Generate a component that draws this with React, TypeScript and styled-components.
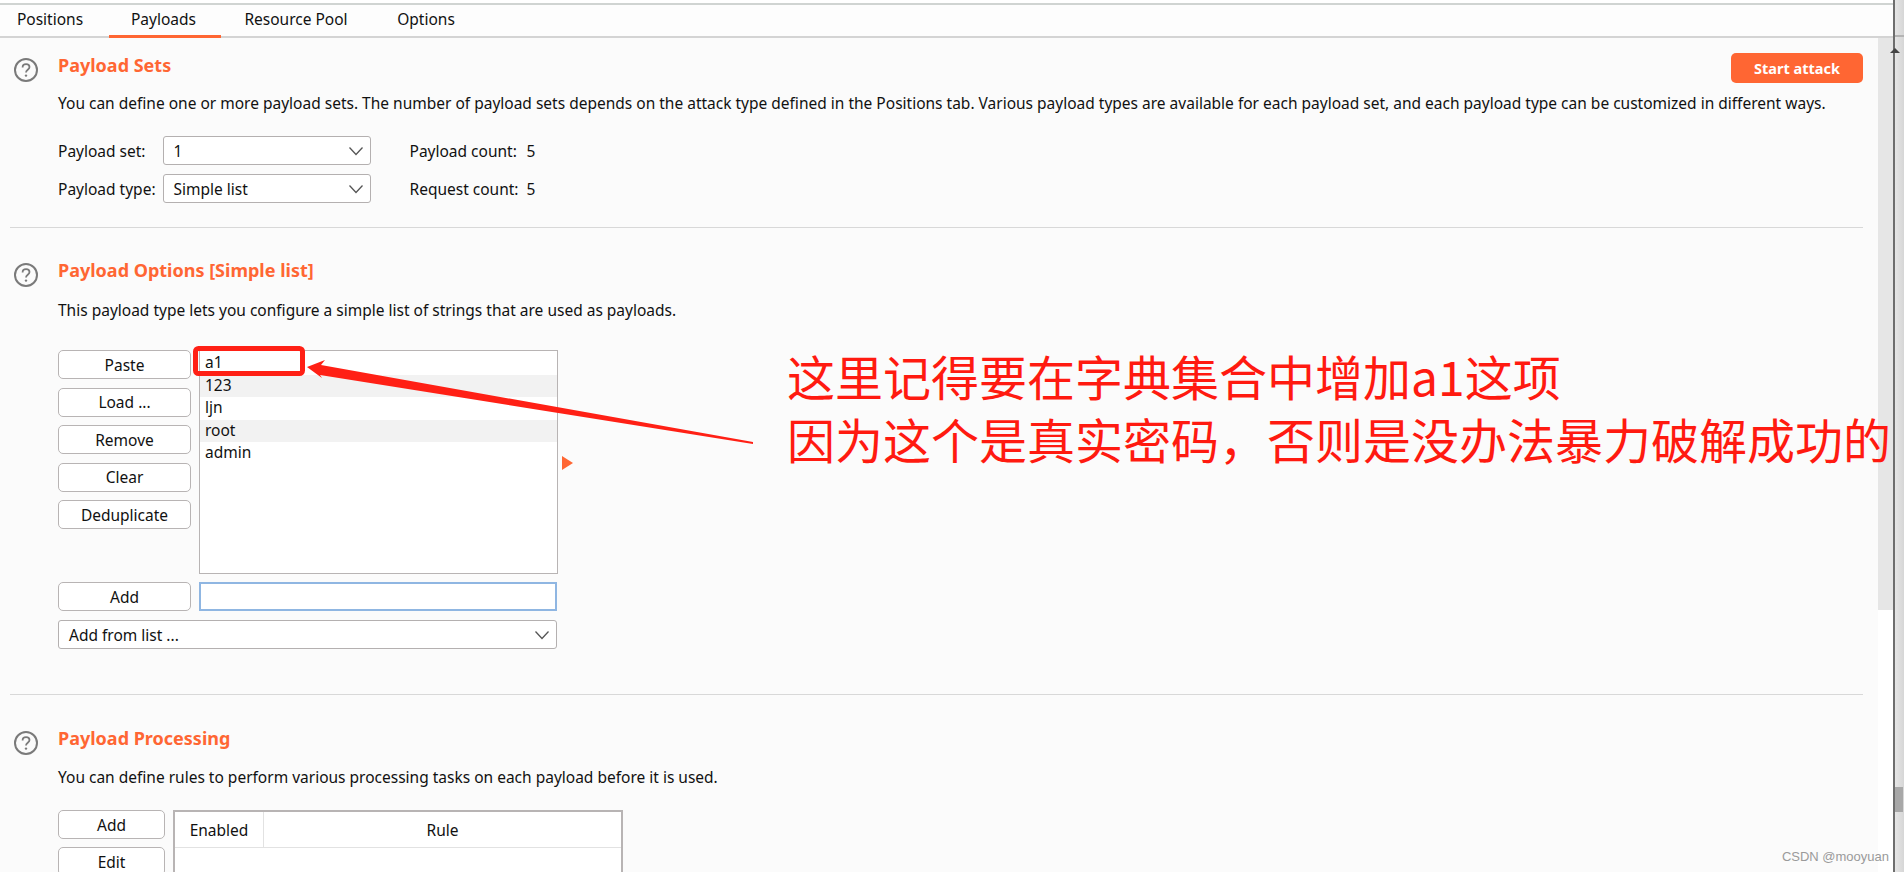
import React from "react";
import styled, { createGlobalStyle } from "styled-components";

const GlobalStyle = createGlobalStyle`
  html, body {
    margin: 0;
    padding: 0;
    background: #fff;
    overflow: hidden;
  }
  * {
    box-sizing: border-box;
  }
`;

const uiFont = `"Noto Sans", "Open Sans", "Noto Sans CJK SC", sans-serif`;

const Screen = styled.div`
  position: relative;
  display: flex;
  width: 1904px;
  height: 872px;
  overflow: hidden;
  font-family: ${uiFont};
  font-size: 15.5px;
  color: #111;
  background: #fff;
`;

const Main = styled.div`
  display: flex;
  flex-direction: column;
  width: 1893px;
  flex: none;
  padding-top: 3px;
`;

const TabBar = styled.div`
  display: flex;
  height: 35px;
  flex: none;
  border-top: 2px solid #d0d4d2;
  border-bottom: 2px solid #d4d4d4;
  background: #fdfdfd;
`;

const Tab = styled.div<{ $active?: boolean; $width: number; $gapAfter?: number }>`
  display: flex;
  align-items: center;
  justify-content: center;
  width: ${(p) => p.$width}px;
  margin-right: ${(p) => p.$gapAfter ?? 0}px;
  height: 33px;
  padding: 0 ${(p) => (p.$active ? 3 : 0)}px 3px 0;
  border-bottom: 3px solid ${(p) => (p.$active ? "#ff6633" : "transparent")};
`;

const Body = styled.div`
  display: flex;
  flex: 1;
  min-height: 0;
`;

const Content = styled.div`
  width: 1878px;
  flex: none;
  padding: 0 15px 0 10px;
  background: #fbfbfb;
  overflow: hidden;
`;

const InnerScroll = styled.div`
  width: 15px;
  flex: none;
  background: linear-gradient(#e6e6e6 0, #e6e6e6 572px, #fff 572px);
`;

const OuterScroll = styled.div`
  display: flex;
  flex-direction: column;
  flex: 1;
  padding-top: 35px;
  border-left: 2px solid #6e6e6e;
  background: linear-gradient(90deg, #e6e6e6, #d6d6d6);
`;

const OuterBand = styled.div`
  height: 2px;
  background: #b4b4b4;
`;

const OuterArrow = styled.div`
  width: 0;
  height: 0;
  margin-top: 11px;
  border-left: 5px solid transparent;
  border-right: 5px solid transparent;
  border-bottom: 5px solid #444;
  margin-left: -5px;
`;

const OuterThumb = styled.div`
  width: 8px;
  height: 25px;
  margin-top: 734px;
  background: #a8a8a8;
`;

const Section = styled.section<{ $height: number; $divider?: boolean }>`
  height: ${(p) => p.$height}px;
  border-bottom: ${(p) => (p.$divider ? "1px solid #d8d8d8" : "none")};
`;

const SectionHead = styled.div<{ $top: number }>`
  display: flex;
  align-items: flex-start;
  justify-content: space-between;
  padding-top: ${(p) => p.$top}px;
`;

const HeadLeft = styled.div`
  display: flex;
`;

const HelpIcon = styled.svg`
  width: 26px;
  height: 26px;
  margin: 4px 19px 0 3px;
  flex: none;
`;

const Heading = styled.h2`
  margin: 0;
  font-size: 18px;
  line-height: 24px;
  font-weight: 700;
  color: #ff6633;
`;

const Description = styled.p<{ $top: number; $bottom: number }>`
  width: fit-content;
  margin: ${(p) => p.$top}px 0 ${(p) => p.$bottom}px 48px;
  line-height: 20px;
  white-space: nowrap;
`;

const StartAttack = styled.button`
  width: 132px;
  height: 30px;
  padding-bottom: 2px;
  border: none;
  border-radius: 5px;
  background: #ff6633;
  color: #fff;
  font: 700 14.5px ${uiFont};
`;

const FieldRow = styled.div<{ $top?: number }>`
  display: flex;
  align-items: center;
  height: 29px;
  margin: ${(p) => p.$top ?? 0}px 0 0 48px;
`;

const FieldLabel = styled.span`
  width: 104.5px;
  flex: none;
  white-space: nowrap;
`;

const CountLabel = styled.span`
  width: 117px;
  margin-left: 39px;
  flex: none;
  white-space: nowrap;
`;

const SelectBox = styled.div<{ $width: number }>`
  display: flex;
  align-items: center;
  justify-content: space-between;
  width: ${(p) => p.$width}px;
  height: 29px;
  padding: 0 6px 0 10px;
  border: 1px solid #b4b0b0;
  border-radius: 3px;
  background: #fff;
  flex: none;
`;

const Chevron = styled.svg`
  width: 16px;
  height: 10px;
`;

const ListArea = styled.div`
  display: flex;
  gap: 8px;
  margin-left: 48px;
`;

const ButtonColumn = styled.div<{ $gap: number }>`
  display: flex;
  flex-direction: column;
  gap: ${(p) => p.$gap}px;
  flex: none;
`;

const SideButton = styled.button<{ $width: number }>`
  width: ${(p) => p.$width}px;
  height: 29px;
  padding: 0;
  border: 1px solid #b8b4b4;
  border-radius: 5px;
  background: #fff;
  color: #111;
  font: 15.5px ${uiFont};
`;

const ListBox = styled.div`
  width: 359px;
  height: 224px;
  padding-top: 1px;
  border: 1px solid #b8b4b4;
  background: #fff;
`;

const ListItem = styled.div<{ $odd?: boolean }>`
  height: 22.6px;
  padding-left: 5px;
  line-height: 21px;
  background: ${(p) => (p.$odd ? "#f2f2f2" : "#fff")};
`;

const ExpandMark = styled.div`
  align-self: center;
  width: 0;
  height: 0;
  margin: 1px 0 0 -4px;
  border-left: 11px solid #ff6633;
  border-top: 7px solid transparent;
  border-bottom: 7px solid transparent;
`;

const AddRow = styled.div`
  display: flex;
  gap: 8px;
  margin: 8px 0 0 48px;
`;

const TextInput = styled.div`
  width: 358px;
  height: 29px;
  border: 2px solid #8fb6e2;
  background: #fff;
`;

const ListSelectRow = styled.div`
  margin: 9px 0 0 48px;
`;

const RulesTable = styled.div`
  width: 450px;
  height: 120px;
  border: 2px solid #b8b4b4;
  background: #fff;
`;

const RulesHeader = styled.div`
  display: grid;
  grid-template-columns: 88px 1fr;
  height: 36px;
  border-bottom: 1px solid #e2e2e2;
`;

const RulesCell = styled.div`
  display: flex;
  align-items: center;
  justify-content: center;
  & + & {
    border-left: 1px solid #e2e2e2;
  }
`;

const NoteLayer = styled.div`
  position: absolute;
  left: 787px;
  top: 344px;
  font-family: "Noto Sans CJK SC", "Noto Sans", sans-serif;
  font-size: 48px;
  line-height: 63px;
  color: #ff1a10;
  white-space: nowrap;
`;

const Callout = styled.svg`
  position: absolute;
  left: 0;
  top: 0;
  width: 1904px;
  height: 872px;
  pointer-events: none;
`;

const Watermark = styled.div`
  position: absolute;
  right: 15px;
  bottom: 8px;
  font-family: "Liberation Sans", sans-serif;
  font-size: 13px;
  color: #9a9a9a;
`;

const Help = () => (
  <HelpIcon viewBox="0 0 26 26">
    <circle cx="13" cy="13" r="11" fill="none" stroke="#7a7a7a" strokeWidth="2" />
    <path
      d="M9.6 10.4c0-2 1.5-3.2 3.5-3.2s3.4 1.2 3.4 2.9c0 2.6-3.5 2.7-3.5 5.3"
      fill="none"
      stroke="#7a7a7a"
      strokeWidth="1.8"
    />
    <circle cx="13" cy="18.6" r="1.2" fill="#7a7a7a" />
  </HelpIcon>
);

const Arrow = () => (
  <Chevron viewBox="0 0 16 10">
    <path d="M1.5 1.5 8 8.5l6.5-7" fill="none" stroke="#555" strokeWidth="1.3" />
  </Chevron>
);

const payloads = ["a1", "123", "ljn", "root", "admin"];
const listButtons = ["Paste", "Load ...", "Remove", "Clear", "Deduplicate"];

const App = () => {
  return (
    <Screen>
      <GlobalStyle />
      <Main>
        <TabBar>
          <Tab $width={100} $gapAfter={9}>
            Positions
          </Tab>
          <Tab $width={112} $active>
            Payloads
          </Tab>
          <Tab $width={150}>Resource Pool</Tab>
          <Tab $width={110}>Options</Tab>
        </TabBar>
        <Body>
          <Content>
            <Section $height={190} $divider>
              <SectionHead $top={15}>
                <HeadLeft>
                  <Help />
                  <Heading>Payload Sets</Heading>
                </HeadLeft>
                <StartAttack>Start attack</StartAttack>
              </SectionHead>
              <Description $top={10} $bottom={23}>
                You can define one or more payload sets. The number of payload sets depends on the
                attack type defined in the Positions tab. Various payload types are available for
                each payload set, and each payload type can be customized in different ways.
              </Description>
              <FieldRow>
                <FieldLabel>Payload set:</FieldLabel>
                <SelectBox $width={208}>
                  1
                  <Arrow />
                </SelectBox>
                <CountLabel>Payload count:</CountLabel>5
              </FieldRow>
              <FieldRow $top={9}>
                <FieldLabel>Payload type:</FieldLabel>
                <SelectBox $width={208}>
                  Simple list
                  <Arrow />
                </SelectBox>
                <CountLabel>Request count:</CountLabel>5
              </FieldRow>
            </Section>
            <Section $height={467} $divider>
              <SectionHead $top={30}>
                <HeadLeft>
                  <Help />
                  <Heading>Payload Options [Simple list]</Heading>
                </HeadLeft>
              </SectionHead>
              <Description $top={12} $bottom={30}>
                This payload type lets you configure a simple list of strings that are used as
                payloads.
              </Description>
              <ListArea>
                <ButtonColumn $gap={8.5}>
                  {listButtons.map((label) => (
                    <SideButton key={label} $width={133}>
                      {label}
                    </SideButton>
                  ))}
                </ButtonColumn>
                <ListBox>
                  {payloads.map((item, i) => (
                    <ListItem key={item} $odd={i % 2 === 1}>
                      {item}
                    </ListItem>
                  ))}
                </ListBox>
                <ExpandMark />
              </ListArea>
              <AddRow>
                <SideButton $width={133}>Add</SideButton>
                <TextInput />
              </AddRow>
              <ListSelectRow>
                <SelectBox $width={499}>
                  Add from list ...
                  <Arrow />
                </SelectBox>
              </ListSelectRow>
            </Section>
            <Section $height={180}>
              <SectionHead $top={31}>
                <HeadLeft>
                  <Help />
                  <Heading>Payload Processing</Heading>
                </HeadLeft>
              </SectionHead>
              <Description $top={11} $bottom={23}>
                You can define rules to perform various processing tasks on each payload before it
                is used.
              </Description>
              <ListArea>
                <ButtonColumn $gap={8}>
                  <SideButton $width={107}>Add</SideButton>
                  <SideButton $width={107}>Edit</SideButton>
                </ButtonColumn>
                <RulesTable>
                  <RulesHeader>
                    <RulesCell>Enabled</RulesCell>
                    <RulesCell>Rule</RulesCell>
                  </RulesHeader>
                </RulesTable>
              </ListArea>
            </Section>
          </Content>
          <InnerScroll />
        </Body>
      </Main>
      <OuterScroll>
        <OuterBand />
        <OuterArrow />
        <OuterThumb />
      </OuterScroll>
      <Callout viewBox="0 0 1904 872">
        <rect x="195.5" y="348.5" width="107" height="25" rx="3" fill="none" stroke="#ff2015" strokeWidth="5" />
        <path d="M307 367 L325 360 L321 365 L753 442 L753 444 L320 375 L322 378 Z" fill="#ff2015" />
      </Callout>
      <NoteLayer>
        这里记得要在字典集合中增加a1这项
        <br />
        因为这个是真实密码，否则是没办法暴力破解成功的
      </NoteLayer>
      <Watermark>CSDN @mooyuan</Watermark>
    </Screen>
  );
};

export default App;
